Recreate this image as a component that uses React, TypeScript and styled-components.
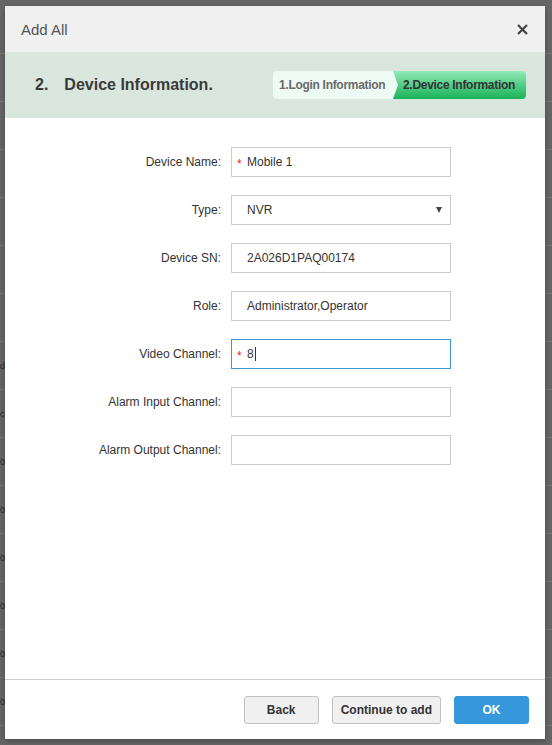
import React from 'react';
import styled, { createGlobalStyle } from 'styled-components';

const GlobalStyle = createGlobalStyle`
  html, body { margin:0; padding:0; }
  body { font-family:"Liberation Sans", Arial, sans-serif; background:#666; }
  * { box-sizing:border-box; }
`;

const Page = styled.div`
  position:relative;width:552px;height:745px;overflow:hidden;background:#676767;
`;

// dimmed table behind the dialog
const Backdrop = styled.div`
  display:flex;flex-direction:column;padding-top:6px;
`;
const BackRow = styled.div`
  height:48px;border-bottom:1px solid #777;display:flex;align-items:center;
  font-size:9px;color:#2a2a2a;
`;
const BackCell = styled.div`
  width:5px;white-space:nowrap;
`;

const Dialog = styled.div`
  position:absolute;left:5px;top:6px;width:540px;height:733px;background:#fff;
  display:flex;flex-direction:column;box-shadow:0 2px 6px rgba(0,0,0,.3);
`;

const Header = styled.div`
  height:46px;background:#f0f0f0;display:flex;align-items:center;justify-content:space-between;
  padding:0 16px 0 16px;
`;
const Title = styled.div`
  font-size:15px;color:#555;
`;
const CloseBtn = styled.button`
  border:0;background:none;padding:0;width:14px;height:14px;display:flex;align-items:center;justify-content:center;cursor:pointer;
`;

const Band = styled.div`
  height:66px;background:#d9e6de;display:flex;align-items:center;justify-content:space-between;
  padding:0 19px 0 30px;
`;
const StepTitle = styled.div`
  font-size:16px;font-weight:bold;color:#3a3a3a;display:flex;gap:16px;
`;

const Steps = styled.div`
  display:flex;height:28px;border-radius:4px;overflow:hidden;
`;
const Step = styled.div<{ active?: boolean }>`
  position:relative;display:flex;align-items:center;font-size:12px;font-weight:bold;
  white-space:nowrap;letter-spacing:-0.3px;
  padding:${p => p.active ? '0 0 0 10px' : '0 0 0 6px'};
  width:${p => p.active ? '133px' : '120px'};
  color:${p => p.active ? '#333' : '#6a6a6a'};
  background:${p => p.active ? 'linear-gradient(180deg,#93eab8 0%,#4ccb82 55%,#1bb259 100%)' : '#eefbf4'};
  ${p => !p.active && `
    &:after{content:'';position:absolute;right:-5px;top:0;width:0;height:0;z-index:2;
      border-top:14px solid transparent;border-bottom:14px solid transparent;border-left:5px solid #eefbf4;}
  `}
`;

const Body = styled.div`
  flex:1;padding-top:29px;
`;
const Form = styled.div`
  display:grid;grid-template-columns:216px 220px;column-gap:10px;row-gap:18px;align-items:center;
`;
const Label = styled.label`
  text-align:right;font-size:12px;color:#333;
`;
const Field = styled.div<{ focused?: boolean }>`
  position:relative;height:30px;border:1px solid ${p => p.focused ? '#3c96d8' : '#ccc'};
  display:flex;align-items:center;padding-left:15px;font-size:12px;color:#333;background:#fff;
`;
const Required = styled.span`
  position:absolute;left:5px;top:9px;color:#e22;font-size:12px;
`;
const Caret = styled.span`
  display:inline-block;width:1px;height:14px;background:#333;margin-left:1px;
`;
const Arrow = styled.span`
  position:absolute;right:8px;top:11px;width:0;height:0;
  border-left:3.5px solid transparent;border-right:3.5px solid transparent;border-top:6px solid #444;
`;

const Footer = styled.div`
  border-top:1px solid #d0d0d0;height:60px;display:flex;align-items:center;justify-content:flex-end;
  gap:13px;padding:0 16px 0 0;
`;
const Button = styled.button<{ primary?: boolean }>`
  height:28px;border-radius:3px;font-family:inherit;font-size:12px;font-weight:bold;cursor:pointer;
  min-width:75px;
  padding:0 ${p => p.primary ? '0' : '8px'};
  border:1px solid ${p => p.primary ? '#3498db' : '#c2c2c2'};
  background:${p => p.primary ? '#3498db' : '#f0f0f0'};
  color:${p => p.primary ? '#fff' : '#333'};
`;

const backRows = ['', '', '', '', '', '', '', 'd', 'c', '0', '0', '0', '0', '0', '0', ''];

const fields = [
  { label: 'Device Name:', value: 'Mobile 1', required: true },
  { label: 'Type:', value: 'NVR', select: true },
  { label: 'Device SN:', value: '2A026D1PAQ00174' },
  { label: 'Role:', value: 'Administrator,Operator' },
  { label: 'Video Channel:', value: '8', required: true, focused: true },
  { label: 'Alarm Input Channel:', value: '' },
  { label: 'Alarm Output Channel:', value: '' },
];

export default function App() {
  return (
    <Page>
      <GlobalStyle />
      <Backdrop>
        {backRows.map((t, i) => (
          <BackRow key={i}><BackCell>{t}</BackCell></BackRow>
        ))}
      </Backdrop>
      <Dialog>
        <Header>
          <Title>Add All</Title>
          <CloseBtn aria-label="close">
            <svg width="11" height="11" viewBox="0 0 11 11">
              <path d="M1 1L10 10M10 1L1 10" stroke="#444" strokeWidth="2.2" />
            </svg>
          </CloseBtn>
        </Header>
        <Band>
          <StepTitle><span>2.</span><span>Device Information.</span></StepTitle>
          <Steps>
            <Step>1.Login Information</Step>
            <Step active>2.Device Information</Step>
          </Steps>
        </Band>
        <Body>
          <Form>
            {fields.map(f => (
              <React.Fragment key={f.label}>
                <Label>{f.label}</Label>
                <Field focused={f.focused}>
                  {f.required && <Required>*</Required>}
                  {f.value}
                  {f.focused && <Caret />}
                  {f.select && <Arrow />}
                </Field>
              </React.Fragment>
            ))}
          </Form>
        </Body>
        <Footer>
          <Button>Back</Button>
          <Button>Continue to add</Button>
          <Button primary>OK</Button>
        </Footer>
      </Dialog>
    </Page>
  );
}
